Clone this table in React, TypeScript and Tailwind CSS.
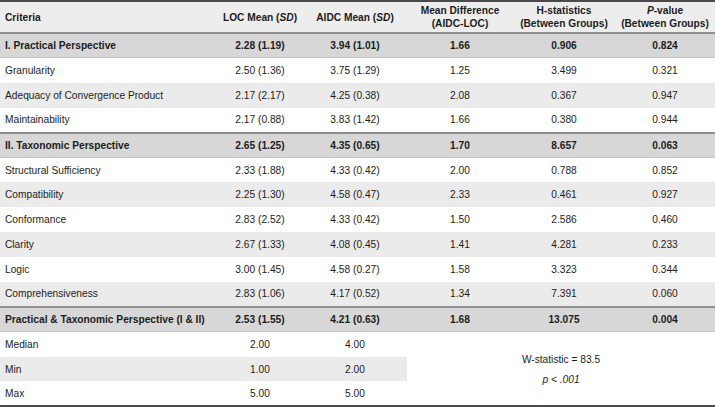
import React from "react";

type Row = {
  label: string;
  loc: string;
  aidc: string;
  diff: string;
  h: string;
  p: string;
  kind: "section" | "item";
  shade?: boolean;
};

const rows: Row[] = [
  { label: "I. Practical Perspective", loc: "2.28 (1.19)", aidc: "3.94 (1.01)", diff: "1.66", h: "0.906", p: "0.824", kind: "section" },
  { label: "Granularity", loc: "2.50 (1.36)", aidc: "3.75 (1.29)", diff: "1.25", h: "3.499", p: "0.321", kind: "item" },
  { label: "Adequacy of Convergence Product", loc: "2.17 (2.17)", aidc: "4.25 (0.38)", diff: "2.08", h: "0.367", p: "0.947", kind: "item", shade: true },
  { label: "Maintainability", loc: "2.17 (0.88)", aidc: "3.83 (1.42)", diff: "1.66", h: "0.380", p: "0.944", kind: "item" },
  { label: "II. Taxonomic Perspective", loc: "2.65 (1.25)", aidc: "4.35 (0.65)", diff: "1.70", h: "8.657", p: "0.063", kind: "section" },
  { label: "Structural Sufficiency", loc: "2.33 (1.88)", aidc: "4.33 (0.42)", diff: "2.00", h: "0.788", p: "0.852", kind: "item" },
  { label: "Compatibility", loc: "2.25 (1.30)", aidc: "4.58 (0.47)", diff: "2.33", h: "0.461", p: "0.927", kind: "item", shade: true },
  { label: "Conformance", loc: "2.83 (2.52)", aidc: "4.33 (0.42)", diff: "1.50", h: "2.586", p: "0.460", kind: "item" },
  { label: "Clarity", loc: "2.67 (1.33)", aidc: "4.08 (0.45)", diff: "1.41", h: "4.281", p: "0.233", kind: "item", shade: true },
  { label: "Logic", loc: "3.00 (1.45)", aidc: "4.58 (0.27)", diff: "1.58", h: "3.323", p: "0.344", kind: "item" },
  { label: "Comprehensiveness", loc: "2.83 (1.06)", aidc: "4.17 (0.52)", diff: "1.34", h: "7.391", p: "0.060", kind: "item", shade: true },
  { label: "Practical & Taxonomic Perspective (I & II)", loc: "2.53 (1.55)", aidc: "4.21 (0.63)", diff: "1.68", h: "13.075", p: "0.004", kind: "section" },
];

const cell = "px-[5px] py-0 align-middle";

export default function App() {
  return (
    <div
      className="w-[715px] h-[410px] bg-white text-[#1c1c1c] text-[10.2px] leading-[13px]"
      style={{ fontFamily: "'Liberation Sans', Arial, sans-serif" }}
    >
      <table className="w-[715px] table-fixed border-collapse border-t-2 border-b-2 border-t-[#4a4a4a] border-b-[#4a4a4a]">
        <colgroup>
          <col className="w-[217px]" />
          <col className="w-[86px]" />
          <col className="w-[104px]" />
          <col className="w-[106px]" />
          <col className="w-[102px]" />
          <col className="w-[100px]" />
        </colgroup>
        <thead>
          <tr className="h-[32px] bg-[#ededed] border-b-2 border-b-[#8e8e8e] font-bold">
            <th className={`${cell} text-left`}>Criteria</th>
            <th className={`${cell} text-center whitespace-nowrap`}>
              LOC Mean (<i>SD</i>)
            </th>
            <th className={`${cell} text-center whitespace-nowrap`}>
              AIDC Mean (<i>SD</i>)
            </th>
            <th className={`${cell} text-center`}>
              Mean Difference
              <br />
              (AIDC-LOC)
            </th>
            <th className={`${cell} text-center whitespace-nowrap`}>
              H-statistics
              <br />
              (Between Groups)
            </th>
            <th className={`${cell} text-center whitespace-nowrap`}>
              <i>P</i>-value
              <br />
              (Between Groups)
            </th>
          </tr>
        </thead>
        <tbody>
          {rows.map((r, i) => {
            const section = r.kind === "section";
            const cls = section
              ? `h-[24.9px] bg-[#d7d7d7] font-bold border-b border-b-[#c2c2c2] ${i > 0 ? "border-t-2 border-t-[#8e8e8e]" : ""}`
              : `h-[24.9px] ${r.shade ? "bg-[#ebebeb]" : "bg-white"}`;
            return (
              <tr key={r.label} className={cls}>
                <td className={`${cell} text-left whitespace-nowrap`}>{r.label}</td>
                <td className={`${cell} text-center`}>{r.loc}</td>
                <td className={`${cell} text-center`}>{r.aidc}</td>
                <td className={`${cell} text-center`}>{r.diff}</td>
                <td className={`${cell} text-center`}>{r.h}</td>
                <td className={`${cell} text-center`}>{r.p}</td>
              </tr>
            );
          })}
          <tr className="h-[24.9px]">
            <td className={`${cell} text-left bg-white`}>Median</td>
            <td className={`${cell} text-center bg-white`}>2.00</td>
            <td className={`${cell} text-center bg-white`}>4.00</td>
            <td colSpan={3} rowSpan={3} className={`${cell} text-center bg-white`}>
              <div className="leading-[20px] pt-[2px]">
                <div>W-statistic = 83.5</div>
                <div>
                  <i>p</i> <i>&lt; .001</i>
                </div>
              </div>
            </td>
          </tr>
          <tr className="h-[24.9px]">
            <td className={`${cell} text-left bg-[#ebebeb]`}>Min</td>
            <td className={`${cell} text-center bg-[#ebebeb]`}>1.00</td>
            <td className={`${cell} text-center bg-[#ebebeb]`}>2.00</td>
          </tr>
          <tr className="h-[24.9px]">
            <td className={`${cell} text-left bg-white`}>Max</td>
            <td className={`${cell} text-center bg-white`}>5.00</td>
            <td className={`${cell} text-center bg-white`}>5.00</td>
          </tr>
        </tbody>
      </table>
    </div>
  );
}
